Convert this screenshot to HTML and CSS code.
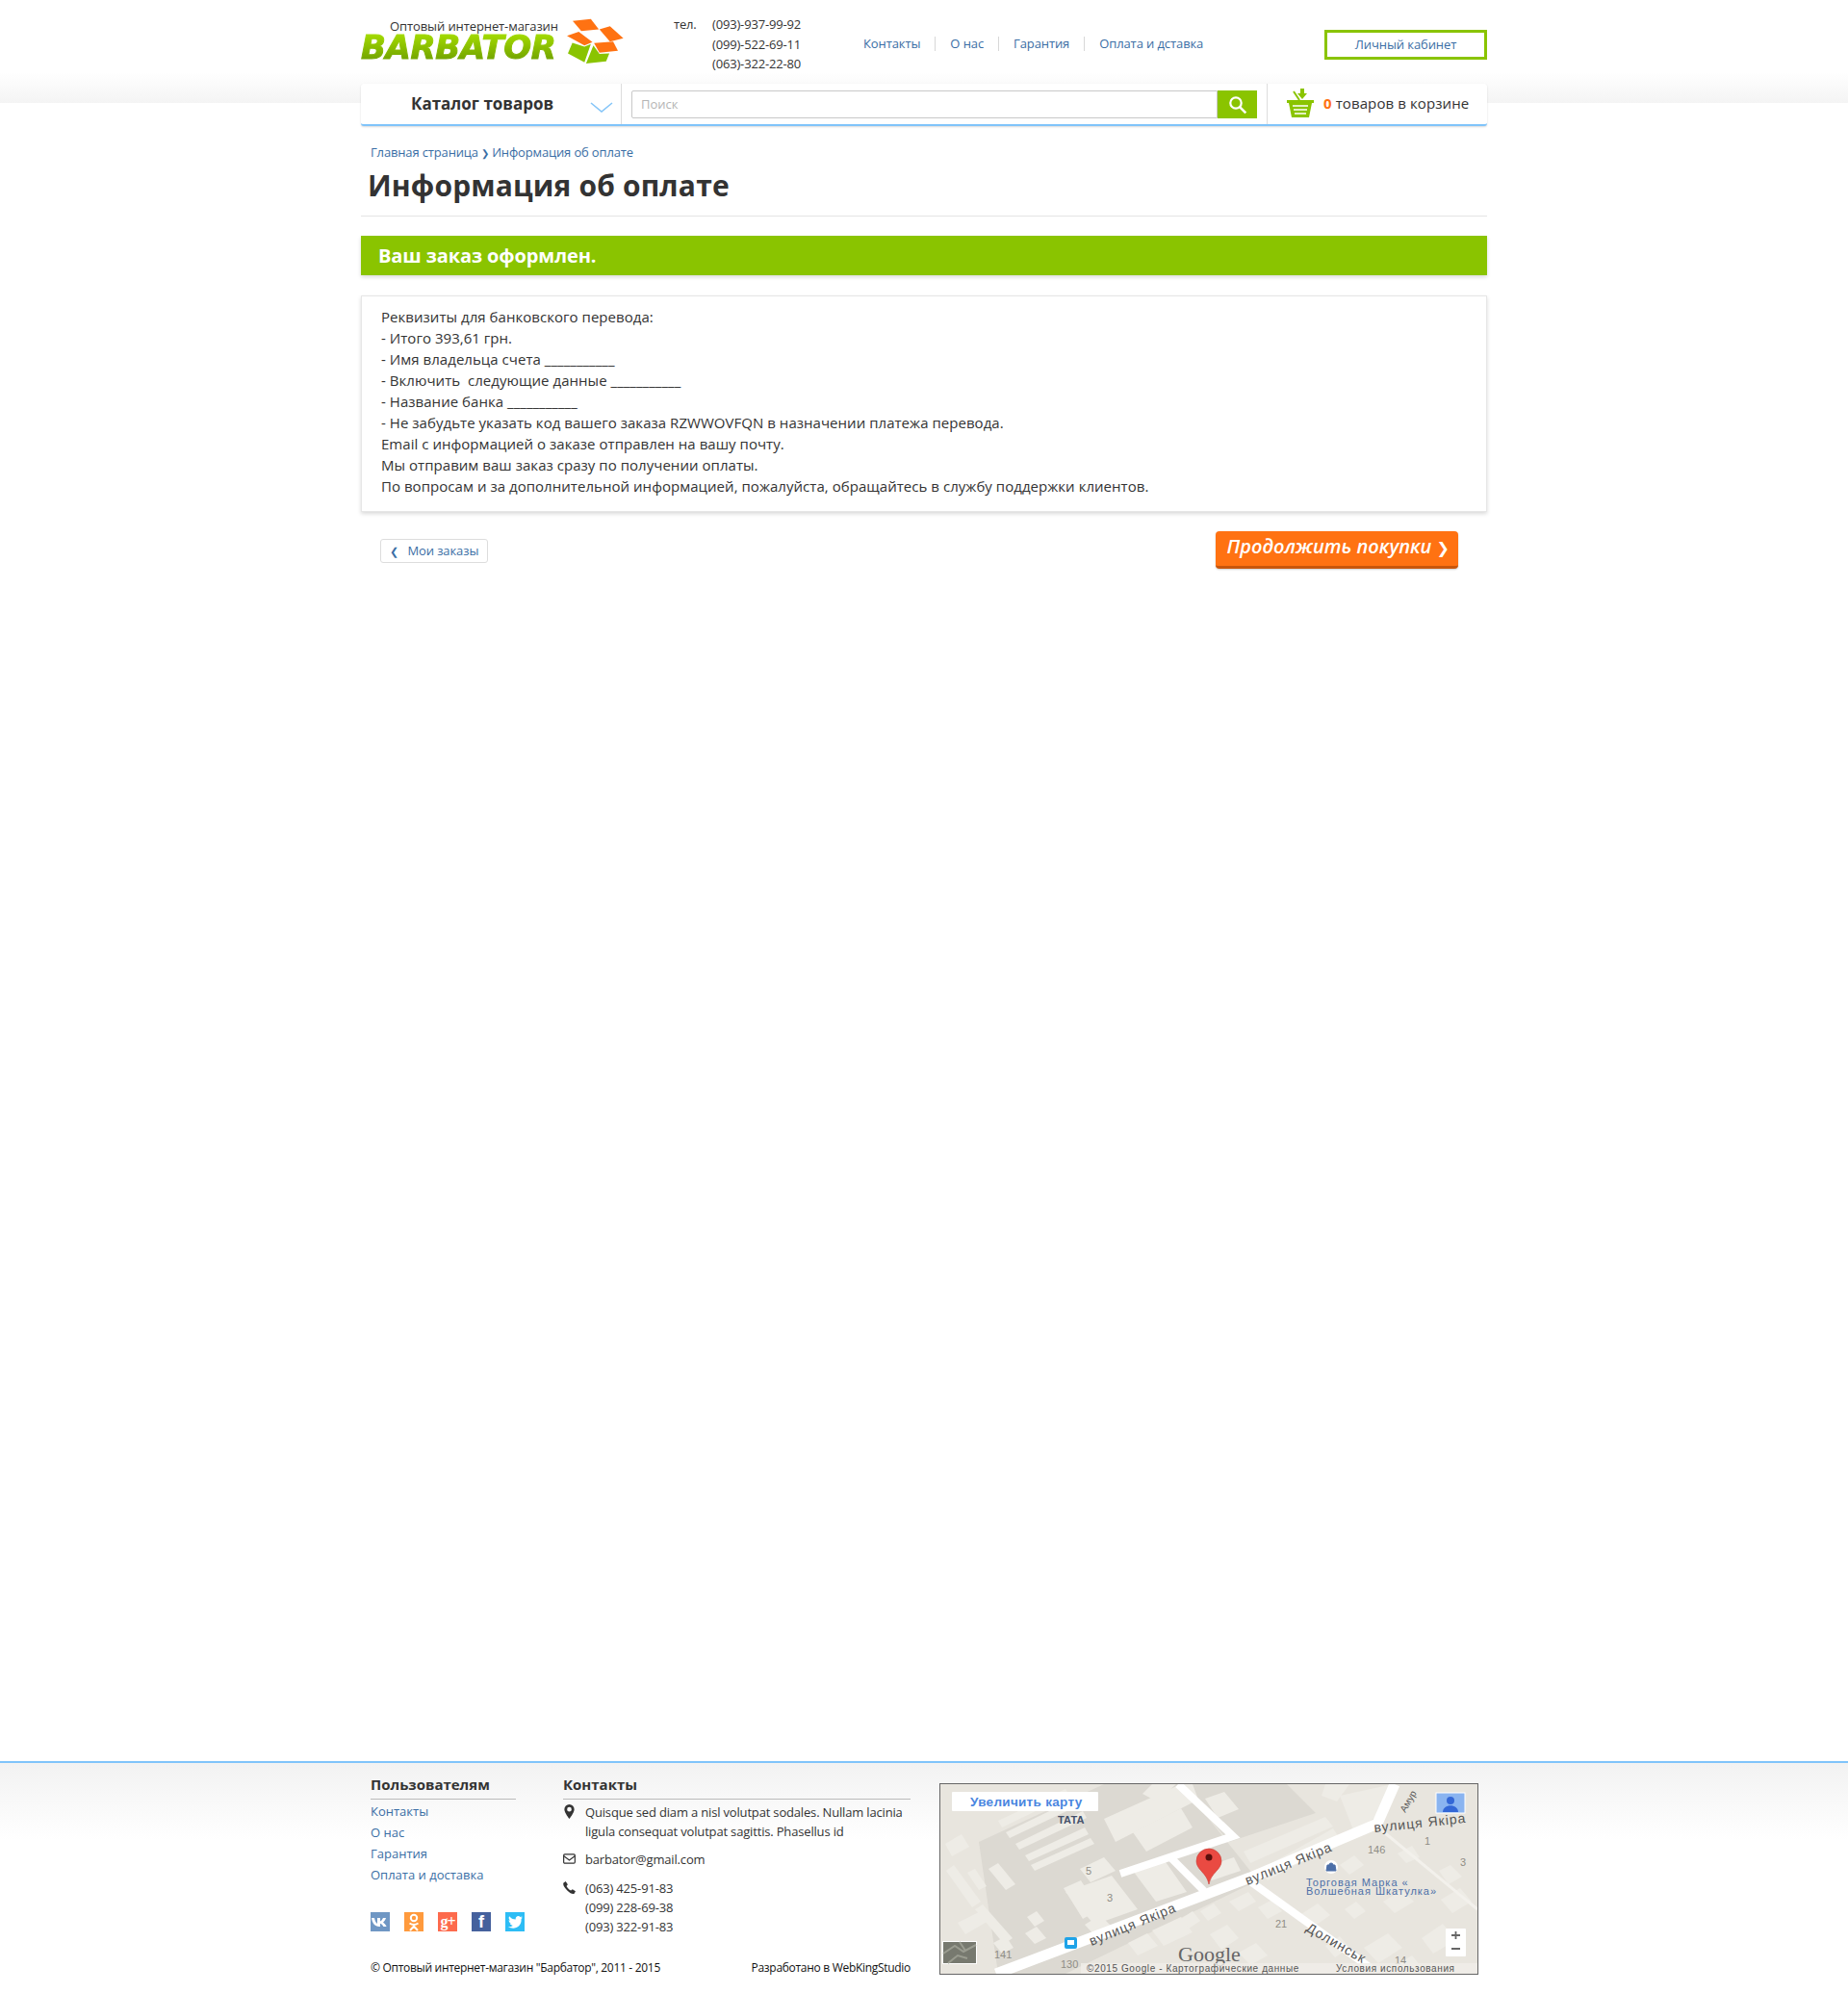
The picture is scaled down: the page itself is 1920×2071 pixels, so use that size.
FILE: index.html
```html
<!DOCTYPE html>
<html lang="ru">
<head>
  <meta charset="UTF-8">
  <title>Информация об оплате</title>
  <link rel="stylesheet" href="styles.css">
</head>
<body>
<header class="header">
  <div class="wrap top">
    <a class="logo">
      <span class="logo-text">
        <span class="logo-sub">Оптовый интернет-магазин</span>
        <span class="logo-name">BARBATOR</span>
      </span>
      <svg class="logo-box" viewBox="675 55 185 145">
        <polygon fill="#ff7212" points="698,63 755,57 780,90 725,95"/>
        <polygon fill="#ff7212" points="782,90 815,80 857,118 815,128"/>
        <polygon fill="#ff7212" points="680,110 717,97 760,130 735,140"/>
        <polygon fill="#ff7212" points="765,133 825,128 840,157 782,163"/>
        <polygon fill="#8ac400" points="697,132 735,144 755,136 735,193 683,165"/>
        <polygon fill="#8ac400" points="763,140 782,167 813,165 803,190 740,197"/>
      </svg>
    </a>
    <div class="phones">
      <span class="phones-label">тел.</span>
      <div class="phones-list">
        <div>(093)-937-99-92</div>
        <div>(099)-522-69-11</div>
        <div>(063)-322-22-80</div>
      </div>
    </div>
    <nav class="nav">
      <a>Контакты</a>
      <a>О нас</a>
      <a>Гарантия</a>
      <a>Оплата и дставка</a>
    </nav>
    <a class="cabinet">Личный кабинет</a>
  </div>
  <div class="wrap bar">
    <div class="catalog">
      <span>Каталог товаров</span>
      <svg class="catalog-arrow" viewBox="0 0 24 11"><path d="M1 1l11 9L23 1" fill="none" stroke="#85c5f8" stroke-width="1.6"/></svg>
    </div>
    <div class="search">
      <div class="search-input">Поиск</div>
      <div class="search-btn">
        <svg viewBox="0 0 20 20" width="20" height="20"><circle cx="8" cy="8" r="5.7" fill="none" stroke="#fff" stroke-width="2.2"/><path d="M12.3 12.3l6 6" stroke="#fff" stroke-width="2.6"/></svg>
      </div>
    </div>
    <div class="cart">
      <svg class="cart-icon" viewBox="0 0 28 30">
        <path d="M14 0h4v5h3l-5 6-5-6h3z" fill="#8ac400"/>
        <path d="M7 3l6 9" stroke="#8ac400" stroke-width="2" fill="none"/>
        <path d="M0 12h28v3h-2l-3 15H5L2 15H0z" fill="#8ac400"/>
        <path d="M6 18h16M7 22h14M8 26h12" stroke="#fff" stroke-width="1.6"/>
      </svg>
      <span><b class="cart-num">0</b> товаров в корзине</span>
    </div>
  </div>
</header>

<main class="wrap main">
  <div class="crumbs"><a>Главная страница</a><i>❯</i><a>Информация об оплате</a></div>
  <h1 class="title">Информация об оплате</h1>
  <div class="success">Ваш заказ оформлен.</div>
  <div class="details">
    Реквизиты для банковского перевода:<br>
    - Итого 393,61 грн.<br>
    - Имя владельца счета ___________<br>
    - Включить&nbsp; следующие данные ___________<br>
    - Название банка ___________<br>
    - Не забудьте указать код вашего заказа RZWWOVFQN в назначении платежа перевода.<br>
    Email с информацией о заказе отправлен на вашу почту.<br>
    Мы отправим ваш заказ сразу по получении оплаты.<br>
    По вопросам и за дополнительной информацией, пожалуйста, обращайтесь в службу поддержки клиентов.
  </div>
  <div class="actions">
    <a class="btn-back"><i>❮</i> Мои заказы</a>
    <a class="btn-go">Продолжить покупки <i>❯</i></a>
  </div>
</main>

<footer class="footer">
  <div class="wrap footer-inner">
    <div class="footer-left">
      <div class="footer-cols">
        <div class="col-users">
          <h3 class="footer-title">Пользователям</h3>
          <a>Контакты</a>
          <a>О нас</a>
          <a>Гарантия</a>
          <a>Оплата и доставка</a>
          <div class="social">
            <span class="soc soc-vk"><svg viewBox="0 0 20 20"><path d="M1 6h3c.5 3 1.500 5 3 6V6h3v3.500c1.200-.5 2.300-2 3-3.500h3c-.6 2-1.800 3.700-3 4.700 1.400.8 2.900 2.500 3.600 4.300h-3.200c-.6-1.500-2-2.800-3.400-3.200V15H9C4.500 15 1.500 11 1 6z" fill="#fff"/></svg></span>
            <span class="soc soc-ok"><svg viewBox="0 0 20 20"><circle cx="10" cy="6" r="3.200" fill="none" stroke="#fff" stroke-width="2"/><path d="M5.500 11.500c2.800 1.800 6.200 1.800 9 0M10 13v1.500M6 19l4-4.500 4 4.500" fill="none" stroke="#fff" stroke-width="2"/></svg></span>
            <span class="soc soc-gp">g+</span>
            <span class="soc soc-fb">f</span>
            <span class="soc soc-tw"><svg viewBox="0 0 20 20"><path d="M18 5.500c-.6.300-1.200.4-1.900.5.700-.4 1.200-1 1.400-1.800-.6.400-1.300.6-2 .8-1.700-1.900-5.200-.7-4.800 2.600-2.700-.1-5-1.400-6.600-3.400-.9 1.500-.4 3.400 1 4.400-.5 0-1-.2-1.500-.4 0 1.600 1.100 3 2.600 3.300-.5.100-1 .2-1.500.1.400 1.300 1.600 2.200 3.100 2.300C6.500 14.900 4.700 15.400 3 15.200c5.800 3.500 14.200.5 13.600-8.200.5-.4 1-.9 1.400-1.500z" fill="#fff"/></svg></span>
          </div>
        </div>
        <div class="col-contacts">
          <h3 class="footer-title">Контакты</h3>
          <div class="contact">
            <svg class="contact-icon" viewBox="0 0 12 16"><path d="M6 0a5.500 5.500 0 0 0-5.500 5.500C.5 9 6 16 6 16s5.500-7 5.500-10.500A5.500 5.500 0 0 0 6 0zm0 8a2.500 2.500 0 1 1 0-5 2.500 2.500 0 0 1 0 5z" fill="#333"/></svg>
            <div>Quisque sed diam a nisl volutpat sodales. Nullam lacinia ligula consequat volutpat sagittis. Phasellus id</div>
          </div>
          <div class="contact contact-mail">
            <svg class="contact-icon" viewBox="0 0 14 12"><rect x=".7" y="1" width="12.600" height="10" rx="1.200" fill="none" stroke="#333" stroke-width="1.300"/><path d="M1 3l6 4.500L13 3" fill="none" stroke="#333" stroke-width="1.300"/></svg>
            <div>barbator@gmail.com</div>
          </div>
          <div class="contact contact-tel">
            <svg class="contact-icon" viewBox="0 0 12 12"><path d="M2.500 0L4.500 3 3.300 4.500c.8 1.700 2.300 3.200 4.200 4.200L9 7.500l3 2-1.300 2.200C9.800 12.500 7 12 4 8.800 1 5.700-.5 3 .5 1.400z" fill="#333"/></svg>
            <div>(063) 425-91-83<br>(099) 228-69-38<br>(093) 322-91-83</div>
          </div>
        </div>
      </div>
      <div class="copy">
        <span>© Оптовый интернет-магазин "Барбатор", 2011 - 2015</span>
        <span>Разработано в WebKingStudio</span>
      </div>
    </div>
    <svg class="map" viewBox="0 0 558 197">
      <rect width="558" height="197" fill="#e8e5de"/>
      <polygon points="40,60 170,0 250,0 330,100 130,197 60,197" fill="#dcd9d2"/>
      <polygon points="250,0 360,0 390,30 300,60" fill="#dcd9d2"/>
      <g fill="#eeece6">
        <polygon points="5,62 22,52 30,65 12,75"/>
        <polygon points="6,90 14,84 42,122 33,128"/>
        <polygon points="28,92 36,88 48,106 40,110"/>
        <polygon points="50,88 60,82 78,104 68,110"/>
        <polygon points="36,130 44,125 75,160 66,166"/>
        <polygon points="18,144 42,132 50,142 26,156"/>
        <polygon points="60,38 130,5 134,11 64,45"/>
        <polygon points="68,50 140,15 144,22 72,56"/>
        <polygon points="78,62 148,28 152,35 82,68"/>
        <polygon points="88,74 150,45 154,52 92,80"/>
        <polygon points="94,84 156,56 160,62 98,90"/>
        <polygon points="145,88 170,76 182,90 156,102"/>
        <polygon points="130,112 178,95 205,130 160,146"/>
        <polygon points="128,108 146,100 165,130 148,140"/>
        <polygon points="150,146 166,136 180,150 163,160"/>
        <polygon points="90,138 100,132 108,142 98,148"/>
        <polygon points="170,36 250,0 262,0 268,16 182,60"/>
        <polygon points="200,50 250,25 262,45 214,70"/>
        <polygon points="200,90 232,78 256,112 224,122"/>
        <polygon points="275,15 295,8 310,26 288,35"/>
        <polygon points="220,0 245,0 225,18 210,10"/>
        <polygon points="315,70 400,34 408,44 322,82"/>
        <polygon points="330,90 408,46 416,58 340,100"/>
        <polygon points="415,12 470,0 458,30 430,50"/>
        <polygon points="400,0 425,0 412,18 396,12"/>
        <polygon points="270,88 305,76 312,90 282,100"/>
        <polygon points="415,84 430,74 440,84 425,94"/>
        <polygon points="375,135 392,124 405,136 388,148"/>
        <polygon points="420,130 432,122 442,132 430,140"/>
        <polygon points="460,122 480,110 492,122 472,134"/>
        <polygon points="330,128 345,120 355,132 340,140"/>
        <polygon points="300,122 320,112 328,122 310,132"/>
        <polygon points="270,132 284,124 292,134 278,142"/>
        <polygon points="250,140 262,132 270,142 258,150"/>
        <polygon points="220,152 250,138 262,154 232,168"/>
        <polygon points="280,156 298,146 310,160 292,172"/>
        <polygon points="195,165 215,155 226,168 205,178"/>
        <polygon points="310,175 328,165 340,178 322,188"/>
        <polygon points="400,168 415,158 425,170 410,180"/>
        <polygon points="440,170 465,155 480,170 455,186"/>
        <polygon points="470,190 490,178 500,190"/>
        <polygon points="500,160 522,145 536,162 512,176"/>
        <polygon points="518,90 530,84 542,96 528,104"/>
        <polygon points="475,72 490,64 498,76 484,82"/>
        <polygon points="520,120 540,108 552,122 532,134"/>
        <polygon points="55,165 68,158 76,170 64,176"/>
        <polygon points="88,155 100,148 110,160 98,166"/>
      </g>
      <g fill="none" stroke="#fff">
        <path d="M58 197L322 97 454 41 472 0" stroke-width="11"/>
        <path d="M247 0L304 54 187 93" stroke-width="8"/>
        <path d="M240 77L274 111" stroke-width="8"/>
        <path d="M322 101L447 191" stroke-width="8"/>
        <path d="M455 45L558 130" stroke-width="3" stroke="#f3f1ec"/>
      </g>
      <g class="map-road">
        <text transform="translate(157 168) rotate(-22)">вулиця Якіра</text>
        <text transform="translate(319 105) rotate(-22)">вулиця Якіра</text>
        <text transform="translate(451 50) rotate(-6)">вулиця Якіра</text>
        <text transform="translate(379 152) rotate(30)">Долинськ</text>
        <text class="map-road-small" transform="translate(483 30) rotate(-60)">Амур</text>
      </g>
      <g class="map-num">
        <text x="151" y="94">5</text>
        <text x="173" y="122">3</text>
        <text x="444" y="72">146</text>
        <text x="503" y="63">1</text>
        <text x="540" y="85">3</text>
        <text x="348" y="149">21</text>
        <text x="56" y="181">141</text>
        <text x="125" y="191">130</text>
        <text x="472" y="187">14</text>
      </g>
      <text class="map-tata" x="122" y="41">ТАТА</text>
      <circle cx="406" cy="86" r="7" fill="#fff"/>
      <path d="M402 84h8l1 6h-10zM404 84a2 2 0 0 1 4 0" fill="#4c6fa8" stroke="#4c6fa8"/>
      <text class="map-place" x="380" y="106">Торговая Марка «</text>
      <text class="map-place" x="380" y="115">Волшебная Шкатулка»</text>
      <path d="M279 67a13 13 0 0 0-13 13c0 9 11 12 13 24 2-12 13-15 13-24a13 13 0 0 0-13-13z" fill="#ea4a42" stroke="#c93a34" stroke-width=".6"/>
      <circle cx="279" cy="76" r="3.500" fill="#5a0f0c"/>
      <rect x="12" y="8" width="152" height="20" rx="1" fill="#fff"/>
      <text class="map-bigger" x="31" y="23">Увеличить карту</text>
      <rect x="515" y="9" width="30" height="21" fill="#8ab4f0" stroke="#fff"/>
      <circle cx="530" cy="17" r="4" fill="#3367d6"/>
      <path d="M522 29c0-9 16-9 16 0z" fill="#3367d6"/>
      <rect x="525" y="150" width="21" height="29" rx="1" fill="#fff"/>
      <path d="M531 157h9M535.500 153v8M531 171h9" stroke="#666" stroke-width="1.800"/>
      <rect x="2" y="163" width="36" height="24" fill="#fff"/>
      <rect x="3" y="164" width="34" height="22" fill="#77796f"/>
      <path d="M3 176l12-8 9 6 13-7M8 186l10-8 10 3M20 164l6 9" stroke="#9a9c90" stroke-width="2" fill="none"/>
      <rect x="129" y="159" width="13" height="12" rx="2" fill="#1fa3e8"/>
      <rect x="132" y="162" width="7" height="5" fill="#fff"/>
      <text class="map-google" x="247" y="184">Google</text>
      <rect x="146" y="186" width="412" height="11" fill="#f0eee9" opacity=".8"/>
      <text class="map-copy" x="152" y="195">©2015 Google - Картографические данные</text>
      <text class="map-copy" x="411" y="195">Условия использования</text>
    </svg>
  </div>
</footer>
</body>
</html>
```

FILE: styles.css
```css
* {
  box-sizing: border-box;
}
html,
body {
  margin: 0;
}
body {
  display: flex;
  flex-direction: column;
  height: 2071px;
  font-family: "Open Sans", "Noto Sans", sans-serif;
  font-size: 13px;
  color: #333;
  background: #fff;
}
a {
  color: #3a6ea5;
  text-decoration: none;
}
.wrap {
  width: 1170px;
  margin: 0 auto;
}

/* header */
.header {
  height: 131px;
  flex: none;
  background: linear-gradient(#fff 75px, #f4f4f4 107px) no-repeat;
  background-size: 100% 107px;
}
.top {
  display: flex;
  align-items: flex-start;
  height: 87px;
}
.logo {
  display: flex;
  width: 325px;
  height: 87px;
  padding-top: 19px;
}
.logo-text {
  display: flex;
  flex-direction: column;
  width: 212px;
}
.logo-sub {
  padding-left: 30px;
  font-size: 13px;
  letter-spacing: -0.1px;
  line-height: 16px;
  color: #333;
}
.logo-name {
  font-family: "DejaVu Sans", sans-serif;
  font-style: italic;
  font-weight: 700;
  font-size: 34px;
  line-height: 29px;
  letter-spacing: -0.4px;
  color: transparent;
  background: linear-gradient(#a4dc00, #6fa000);
  -webkit-background-clip: text;
  background-clip: text;
  -webkit-text-stroke: 1px transparent;
}
.logo-box {
  width: 62px;
  height: 48px;
}
.phones {
  display: flex;
  width: 197px;
  padding-top: 15px;
  line-height: 20.500px;
  letter-spacing: -0.17px;
}
.phones-label {
  width: 40px;
}
.nav {
  display: flex;
  width: 479px;
  padding-top: 35px;
  letter-spacing: -0.1px;
}
.nav a {
  line-height: 20px;
}
.nav a + a {
  margin-left: 15px;
  padding-left: 15px;
  border-left: 1px solid #d8d8d8;
  line-height: 15px;
  height: 15px;
  margin-top: 3px;
}
.cabinet {
  flex: none;
  width: 169px;
  height: 31px;
  margin-top: 31px;
  border: 3px solid #8ac400;
  text-align: center;
  line-height: 24px;
  letter-spacing: -0.1px;
  background: #fff;
}
.bar {
  display: flex;
  height: 44px;
  background: #fff;
  border-bottom: 2px solid #80c4fa;
  border-radius: 3px;
  box-shadow: 0 1px 2px rgba(0, 0, 0, 0.15);
}
.catalog {
  display: flex;
  align-items: center;
  width: 271px;
  padding-left: 52px;
  border-right: 1px solid #ddd;
  font-size: 17px;
  font-weight: 700;
  line-height: 20px;
}
.catalog-arrow {
  width: 24px;
  height: 11px;
  margin: 6px 0 0 38px;
}
.search {
  display: flex;
  width: 671px;
  padding: 7px 10px 6px;
  border-right: 1px solid #ddd;
}
.search-input {
  flex: 1;
  padding-left: 9px;
  border: 1px solid #c8c8c8;
  border-radius: 2px 0 0 2px;
  line-height: 27px;
  color: #b5b5b5;
}
.search-btn {
  display: flex;
  align-items: center;
  justify-content: center;
  width: 41px;
  background: #8ac400;
}
.cart {
  display: flex;
  align-items: center;
  flex: 1;
  padding: 0 0 2px 20px;
  font-size: 15px;
  letter-spacing: 0.1px;
}
.cart-icon {
  width: 28px;
  height: 30px;
  margin-right: 10px;
}
.cart-num {
  color: #ff7212;
}

/* main */
.main {
  flex: 1;
}
.crumbs {
  padding: 18px 0 0 10px;
  line-height: 18px;
  letter-spacing: -0.15px;
}
.crumbs i {
  margin: 0 3px;
  font-style: normal;
  font-weight: 700;
  font-size: 10px;
  color: #3a6ea5;
  font-family: "DejaVu Sans", sans-serif;
}
.title {
  margin: 0;
  padding: 3px 0 0 7px;
  height: 56px;
  font-size: 30px;
  line-height: 42px;
  font-weight: 700;
  letter-spacing: 0.15px;
  border-bottom: 1px solid #e5e5e5;
}
.success {
  height: 41px;
  margin-top: 20px;
  padding-left: 18px;
  background: #8ac400;
  color: #fff;
  font-size: 20px;
  font-weight: 700;
  line-height: 41px;
  letter-spacing: -0.1px;
  box-shadow: 0 2px 4px rgba(0, 0, 0, 0.15);
}
.details {
  height: 225px;
  margin-top: 21px;
  padding: 10px 20px;
  border: 1px solid #e6e6e6;
  box-shadow: 0 2px 4px rgba(0, 0, 0, 0.15);
  font-size: 15px;
  line-height: 22px;
  letter-spacing: 0.04px;
}
.actions {
  display: flex;
  justify-content: space-between;
  align-items: flex-start;
  padding: 20px 30px 0 20px;
}
.btn-back {
  height: 25px;
  margin-top: 8px;
  padding: 0 9px;
  border: 1px solid #ddd;
  border-radius: 3px;
  line-height: 23px;
  letter-spacing: -0.1px;
}
.btn-back i {
  margin-right: 6px;
  font-style: normal;
  font-weight: 700;
  font-size: 11px;
  font-family: "DejaVu Sans", sans-serif;
}
.btn-go {
  height: 39px;
  padding: 0 9px 0 11px;
  background: #ff7212;
  border-bottom: 3px solid #c8560c;
  border-radius: 4px;
  color: #fff;
  font-size: 20px;
  font-style: italic;
  font-weight: 600;
  line-height: 32px;
  box-shadow: 0 1px 2px rgba(0, 0, 0, 0.2);
}
.btn-go i {
  font-style: normal;
  font-weight: 700;
  font-size: 16px;
  font-family: "DejaVu Sans", sans-serif;
}

/* footer */
.footer {
  flex: none;
  height: 241px;
  border-top: 2px solid #80c4fa;
  background: linear-gradient(#f2f2f2, #fff 80px);
}
.footer-inner {
  display: flex;
  padding-left: 10px;
}
.footer-left {
  width: 561px;
}
.footer-cols {
  display: flex;
  height: 203px;
}
.col-users {
  display: flex;
  flex-direction: column;
  align-items: flex-start;
  width: 200px;
}
.col-users a {
  line-height: 22px;
}
.footer-title {
  align-self: stretch;
  height: 38px;
  margin: 0 0 3px;
  padding-top: 12px;
  border-bottom: 1px solid #bbb;
  font-size: 15px;
  line-height: 20px;
  font-weight: 700;
}
.col-users .footer-title {
  width: 151px;
  align-self: flex-start;
  margin-bottom: 1px;
}
.social {
  display: flex;
  gap: 15px;
  margin-top: 28px;
}
.soc {
  display: flex;
  align-items: center;
  justify-content: center;
  width: 20px;
  height: 20px;
  color: #fff;
  font-family: "Liberation Serif", serif;
  font-size: 16px;
  font-weight: 700;
}
.soc svg {
  width: 20px;
  height: 20px;
}
.soc-vk { background: #6f97c4; }
.soc-ok { background: #ff9a3d; }
.soc-gp { background: #fd6a4c; letter-spacing: -1px; }
.soc-fb { background: #45619d; font-family: "Liberation Sans", sans-serif; font-size: 18px; }
.soc-tw { background: #2dbdf5; }
.col-contacts {
  flex: 1;
  letter-spacing: -0.17px;
}
.col-contacts .footer-title {
  letter-spacing: 0;
}
.contact {
  display: flex;
  line-height: 20px;
}
.contact-mail {
  margin-top: 9px;
}
.contact-tel {
  margin-top: 10px;
}
.contact-icon {
  flex: none;
  width: 13px;
  height: 15px;
  margin: 2px 10px 0 0;
}
.copy {
  display: flex;
  justify-content: space-between;
  font-size: 12px;
  line-height: 20px;
  letter-spacing: -0.3px;
  color: #111;
}
.map {
  width: 560px;
  height: 199px;
  margin: 21px 0 0 30px;
  border: 1px solid #666;
  background: #e8e5de;
}
.map text {
  font-family: "Liberation Sans", sans-serif;
}
.map-road text {
  font-size: 14px;
  letter-spacing: 1px;
  fill: #555;
}
.map-road .map-road-small {
  font-size: 10px;
  letter-spacing: 0;
}
.map-num text {
  font-size: 11px;
  fill: #8f8d85;
}
.map-tata {
  font-size: 11px;
  font-weight: 700;
  fill: #44506a;
}
.map-place {
  font-size: 11px;
  letter-spacing: 1px;
  fill: #4c6fa8;
}
.map-bigger {
  font-size: 13.500px;
  font-weight: 700;
  letter-spacing: 0.3px;
  fill: #4a86e0;
}
.map-google {
  font-size: 22px;
  fill: #666;
}
.map text.map-google {
  font-family: "Liberation Serif", serif;
}
.map-copy {
  font-size: 10px;
  letter-spacing: 0.6px;
  fill: #555;
}
```
